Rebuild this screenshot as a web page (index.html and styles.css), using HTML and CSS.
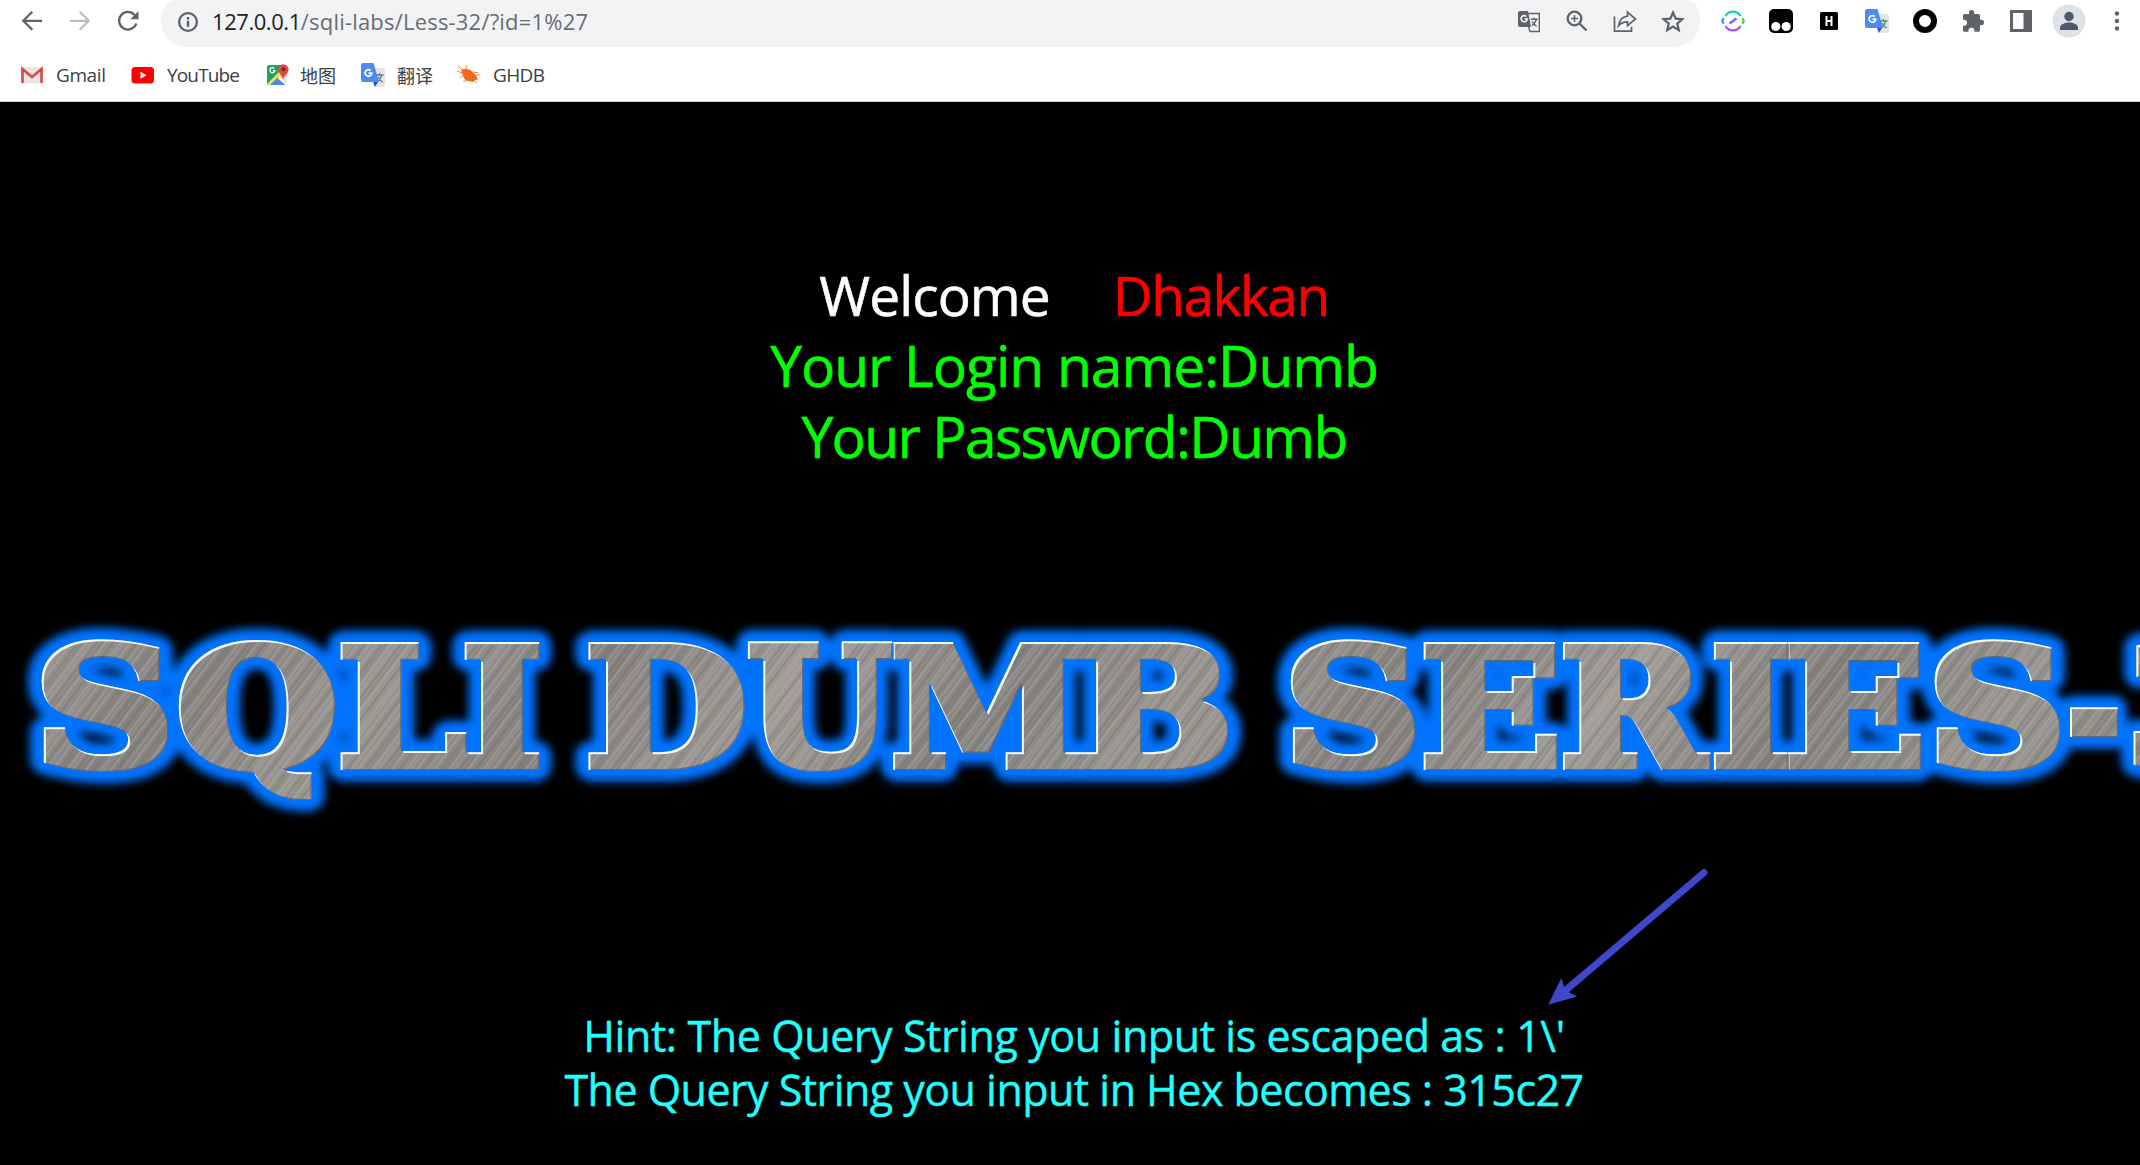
FILE: index.html
```
<!DOCTYPE html>
<html lang="en">
<head>
<meta charset="utf-8">
<title>127.0.0.1/sqli-labs/Less-32</title>
<link rel="stylesheet" href="styles.css">
</head>
<body>
<header class="chrome">
  <div class="toolbar">
    <nav class="nav">
      <span class="cell"><svg class="ico" viewBox="0 0 24 24"><path class="line" d="M22 11.8H3.5M12.3 2.8l-9 9 9 9"/></svg></span>
      <span class="cell faded"><svg class="ico" viewBox="0 0 24 24"><path class="line" d="M2 11.8h18.5M11.7 2.8l9 9-9 9"/></svg></span>
      <span class="cell"><svg class="ico" viewBox="0 0 24 24"><path class="line" d="M20.3 14.5A8.8 8.8 0 1 1 18.6 6"/><path class="solid" d="M22.5 2v8.2h-8.2z"/></svg></span>
    </nav>
    <div class="omnibox">
      <svg class="info" viewBox="0 0 24 24"><circle class="line" cx="12" cy="12" r="8.9"/><path class="solid" d="M10.8 10.8h2.4v6h-2.4zM10.8 7h2.4v2.4h-2.4z"/></svg>
      <div class="url"><span class="host">127.0.0.1</span><span class="path">/sqli-labs/Less-32/?id=1%27</span></div>
      <span class="cell"><svg class="ico" viewBox="0 0 24 24"><path class="thin" d="M11 4.500h11.300v18H13l-1.500-5M14 10.300h6.700M17 8.500v1.800M19.500 10.300c-1 3.200-2.500 5-4.500 6.500M15.100 12.500c1 2 2.500 3.500 4.500 4.500"/><path class="solid" d="M3 2h8l3 16H3a2 2 0 0 1-2-2V4a2 2 0 0 1 2-2z"/><path d="M9.400 7.500a3.100 3.100 0 1 0 .9 2.500H7.500" fill="none" stroke="#f1f3f4" stroke-width="1.600"/></svg></span>
      <span class="cell"><svg class="ico" viewBox="0 0 24 24"><circle class="line" cx="9.500" cy="9.500" r="6.800"/><path class="line" d="M14.500 14.500l7 7"/><path class="thin" d="M6 9.500h7M9.500 6v7"/></svg></span>
      <span class="cell"><svg class="ico" viewBox="0 0 24 24"><path class="thin2" d="M1.500 7.500v14.700h17v-4.500"/><path class="thin2" d="M14.500 3.200l8 6.800-8 6.600v-3.800c-4-.2-6.500 1-9 4 .8-5 3.500-9 9-9.600z"/></svg></span>
      <span class="cell"><svg class="ico" viewBox="0 0 24 24"><path class="thin2 heavy" d="M12 3.500l2.700 6.100 6.600.6-5 4.400 1.500 6.500-5.800-3.500-5.800 3.500 1.500-6.500-5-4.400 6.600-.6z"/></svg></span>
    </div>
    <div class="extensions">
      <span class="cell"><svg class="ico" viewBox="0 0 24 24"><g fill="none" stroke-width="2.200"><path d="M4.500 7a8.600 8.600 0 0 1 15 0" stroke="#10d0c8"/><path d="M4.500 17a8.600 8.600 0 0 0 15 0" stroke="#a94dff"/><path d="M3 9.500c-2.200 1-2.200 4 0 5" stroke="#2595ff"/><path d="M21 9.500c2.200 1 2.200 4 0 5" stroke="#23e047"/><path d="M8.500 14.500l7-5" stroke="#6a62ff"/></g></svg></span>
      <span class="cell"><svg class="ico" viewBox="0 0 24 24"><rect width="24" height="24" y="0" rx="5"/><circle cx="6.800" cy="17.500" r="4.600" fill="#fff"/><circle cx="17.200" cy="17.500" r="4.600" fill="#fff"/></svg></span>
      <span class="cell"><svg class="ico" viewBox="0 0 24 24"><rect x="3" y="3" width="18" height="18" rx="1.500"/><path d="M9.500 7v10M14.500 7v10M9.500 12h5" stroke="#fff" stroke-width="2"/></svg></span>
      <span class="cell"><svg class="ico" viewBox="0 0 24 24"><use href="#translate"/></svg></span>
      <span class="cell"><svg class="ico" viewBox="0 0 24 24"><circle cx="12" cy="12" r="9" fill="#fff" stroke="#000" stroke-width="6"/></svg></span>
      <span class="cell"><svg class="ico" viewBox="0 0 24 24"><path class="solid" d="M2 6.500Q2 5 3.600 5H8V3.600a2.600 2.600 0 0 1 5.200 0V5h4.200Q19 5 19 6.600v4.200h1.400a2.600 2.600 0 0 1 0 5.200H19v5.200q0 1.600-1.600 1.600h-4v-1a3 3 0 0 0-6 0v1H3.600Q2 22.800 2 21.200v-4.400h1a3 3 0 0 0 0-6H2z"/></svg></span>
      <span class="cell"><svg class="ico" viewBox="0 0 24 24"><path class="solid" fill-rule="evenodd" d="M1 1h22v22H1zM4 4v16h10.500V4z"/></svg></span>
      <span class="cell"><svg class="avatar" viewBox="0 0 34 34"><circle cx="17" cy="17" r="16.500" fill="#dee1e6"/><g fill="#4e586e"><circle cx="17" cy="12.500" r="4.700"/><path d="M8 26v-2.500c0-3 5-5 9-5s9 2 9 5V26z"/></g></svg></span>
      <span class="cell"><svg class="ico" viewBox="0 0 24 24"><g class="solid"><circle cx="12" cy="4.500" r="2.200"/><circle cx="12" cy="12" r="2.200"/><circle cx="12" cy="19.500" r="2.200"/></g></svg></span>
    </div>
  </div>
  <div class="bookmarks">
    <a class="bookmark gmail"><svg class="ico" viewBox="0 0 24 24"><rect x="1" y="4" width="22" height="16.500" rx="1.500" fill="#e6e6e6"/><path d="M2.500 20V6l9.500 8 9.500-8v14" fill="none" stroke="#dc4a3d" stroke-width="2.600"/></svg>Gmail</a>
    <a class="bookmark youtube"><svg class="ico" viewBox="0 0 24 24"><rect x="0.500" y="4" width="22.500" height="16.500" rx="3.500" fill="#f00"/><path d="M9.500 8.700l6 3.500-6 3.500z" fill="#fff"/></svg>YouTube</a>
    <a class="bookmark maps"><svg class="ico" viewBox="0 0 24 24"><rect x="1" y="2" width="20" height="20" rx="2" fill="#1fa463"/><path d="M21 10v12H3z" fill="#e3e3e3"/><path d="M1.500 20.500L14 8l4 4L6 22H3z" fill="#ffdb4a"/><path d="M4 22l8-8 8 8z" fill="#4a89f3"/><path d="M12.500 14.500L21 22" stroke="#fff" stroke-width="2"/><path d="M8.300 5.500a2.500 2.500 0 1 0 .6 2.200H7" fill="none" stroke="#fff" stroke-width="1.300"/><path d="M17.200 17c-.5-5-5-6-5-10.500a5.200 5.200 0 0 1 10.400 0C22.600 11 17.800 12 17.200 17z" fill="#e24a3f"/><circle cx="17.400" cy="6.200" r="2" fill="#7d231d"/></svg>地图</a>
    <a class="bookmark fanyi"><svg class="ico" viewBox="0 0 24 24"><g id="translate"><path d="M11 5h11q2 0 2 2v15q0 2-2 2h-8z" fill="#e4e4e4"/><path d="M14.500 12h8M18.500 10v2M21 12c-1 3-3 5.500-5.500 7M17 14c1 2 2.500 4 5 5" fill="none" stroke="#5d7f88" stroke-width="1.300"/><path d="M12 18.500h5.500L13.800 24z" fill="#2f51c8"/><path d="M2 0h10.500l5.500 19H2q-2 0-2-2V2q0-2 2-2z" fill="#4b8bf5"/><path d="M9.700 7.500a3.300 3.300 0 1 0 1 2.700H7.500" fill="none" stroke="#fff" stroke-width="1.800"/></g></svg>翻译</a>
    <a class="bookmark ghdb"><svg class="ico" viewBox="0 0 24 24"><path d="M4 7c4-2 8-1.500 11 1.500l4 4 2 4-3 .5-2 2-4-1c-4 0-5-3-6.500-6z" fill="#f2681c"/><path d="M1 3l5 5M0 8l7 3M9 2l1 5M15 9l7 1M18 12h5M17 17l3 3M12 17l-6 1.500M7 12l-4 3" stroke="#f58a4d" stroke-width="1" fill="none"/></svg>GHDB</a>
  </div>
</header>

<main class="page">
  <section class="login">
    <div class="welcome"><span>Welcome</span><span class="user">Dhakkan</span></div>
    <div class="name">Your Login name:Dumb</div>
    <div class="password">Your Password:Dumb</div>
  </section>

  <svg class="banner" viewBox="0 600 2140 230">
    <defs>
      <linearGradient id="sheen" gradientUnits="userSpaceOnUse" x1="0" y1="640" x2="260" y2="840" spreadMethod="reflect">
        <stop offset="0" stop-color="#a09c98"/><stop offset=".5" stop-color="#84817f"/><stop offset="1" stop-color="#9a9692"/>
      </linearGradient>
      <pattern id="brushed" width="2200" height="230" y="600" patternUnits="userSpaceOnUse">
        <g transform="translate(0 -600)">
          <rect y="600" width="2200" height="230" fill="url(#sheen)"/>
          <rect y="600" width="2200" height="230" fill="url(#scratches)"/>
        </g>
      </pattern>
      <pattern id="scratches" width="61" height="400" patternUnits="userSpaceOnUse" patternTransform="rotate(37)">
        <path stroke="#b4b0ab" stroke-opacity=".4" d="M3 0v400M17 0v400M29 0v400M44 0v400M56 0v400" stroke-width="2"/>
        <path stroke="#5f5d5c" stroke-opacity=".35" d="M8 0v400M22 0v400M37 0v400M50 0v400" stroke-width="1.500"/>
        <path stroke="#c4bfb9" stroke-opacity=".4" d="M12 0v400M33 0v400M59 0v400" stroke-width="1"/>
        <path stroke="#555" stroke-opacity=".4" d="M25 0v400M41 0v400" stroke-width=".8"/>
      </pattern>
      <filter id="glow" filterUnits="userSpaceOnUse" x="0" y="600" width="2200" height="230" color-interpolation-filters="sRGB"><feGaussianBlur stdDeviation="4.500"/></filter>
      <filter id="bevel" filterUnits="userSpaceOnUse" x="0" y="600" width="2200" height="230" color-interpolation-filters="sRGB">
        <feOffset in="SourceAlpha" dx="2" dy="2" result="down"/>
        <feComposite in="SourceAlpha" in2="down" operator="out" result="lightEdge"/>
        <feFlood flood-color="#f4fbff"/><feComposite in2="lightEdge" operator="in" result="light"/>
        <feOffset in="SourceAlpha" dx="-1.500" dy="-1.500" result="up"/>
        <feComposite in="SourceAlpha" in2="up" operator="out" result="darkEdge"/>
        <feFlood flood-color="#4c5668" flood-opacity=".7"/><feComposite in2="darkEdge" operator="in" result="dark"/>
        <feMerge><feMergeNode in="SourceGraphic"/><feMergeNode in="dark"/><feMergeNode in="light"/></feMerge>
      </filter>
      <g id="title" class="title">
        <text x="33.500" y="766" textLength="141.700" lengthAdjust="spacingAndGlyphs">S</text>
        <text x="175.400" y="766" textLength="162.800" lengthAdjust="spacingAndGlyphs">Q</text>
        <text x="336.500" y="766" textLength="129.300" lengthAdjust="spacingAndGlyphs">L</text>
        <text x="460.800" y="766" textLength="82.200" lengthAdjust="spacingAndGlyphs">I</text>
        <text x="584.300" y="766" textLength="163.400" lengthAdjust="spacingAndGlyphs">D</text>
        <text x="746.200" y="766" textLength="145.600" lengthAdjust="spacingAndGlyphs">U</text>
        <text x="889.900" y="766" textLength="193.800" lengthAdjust="spacingAndGlyphs">M</text>
        <text x="1074.300" y="766" textLength="159.800" lengthAdjust="spacingAndGlyphs">B</text>
        <text x="1282.700" y="766" textLength="139.400" lengthAdjust="spacingAndGlyphs">S</text>
        <text x="1419.400" y="766" textLength="142.200" lengthAdjust="spacingAndGlyphs">E</text>
        <text x="1558.900" y="766" textLength="146" lengthAdjust="spacingAndGlyphs">R</text>
        <text x="1710" y="766" textLength="81" lengthAdjust="spacingAndGlyphs">I</text>
        <text x="1783.400" y="766" textLength="142.200" lengthAdjust="spacingAndGlyphs">E</text>
        <text x="1926.600" y="766" textLength="140.600" lengthAdjust="spacingAndGlyphs">S</text>
        <text x="2066" y="766" textLength="55.800" lengthAdjust="spacingAndGlyphs">-</text>
        <text x="2125.500" y="766" textLength="123" lengthAdjust="spacingAndGlyphs">3</text>
      </g>
    </defs>
    <use href="#title" class="halo" filter="url(#glow)"/>
    <use href="#title" class="metal" filter="url(#bevel)"/>
  </svg>

  <section class="hints">
    <div class="hint">Hint: The Query String you input is escaped as : 1\'</div>
    <div class="hex">The Query String you input in Hex becomes : 315c27</div>
  </section>

  <svg class="arrow" viewBox="0 0 220 200"><path d="M184 42.700L46 160" stroke="#3f48cc" stroke-width="7" stroke-linecap="round"/><path d="M28.200 174.800L41.300 148l3.200 10 4.600 4.200 8.100 4.200z" fill="#3f48cc"/></svg>
</main>
</body>
</html>
```
FILE: styles.css
```
body {
  margin: 0;
  height: 1165px;
  overflow: hidden;
  background: #000;
  font-family: "Open Sans", "Noto Sans CJK SC", sans-serif;
}

svg { display: block; flex: none; }

/* browser chrome */
.chrome {
  height: 101px;
  background: #fff;
  border-bottom: 1px solid #d0d0d0;
}
.toolbar {
  display: flex;
  height: 47px;
}
.nav, .extensions { display: flex; height: 42px; }
.nav { padding-left: 8px; }
.extensions { margin-left: 9px; width: 431px; }
.cell {
  flex: none;
  width: 48px;
  height: 42px;
  display: flex;
  align-items: center;
  justify-content: center;
}
.faded { opacity: .42; }
.ico { width: 24px; height: 24px; }
.avatar { width: 34px; height: 34px; }
.line { fill: none; stroke: #5f6368; stroke-width: 2.3; }
.thin { fill: none; stroke: #5f6368; stroke-width: 1.4; }
.thin2 { fill: none; stroke: #5f6368; stroke-width: 1.7; }
.heavy { stroke-width: 2.2; }
.solid { fill: #5f6368; }

.omnibox {
  flex: 1;
  display: flex;
  height: 47px;
  margin-left: 9px;
  padding: 0 3px 0 15px;
  background: #f1f3f4;
  border-radius: 14px 14px 26px 26px / 20px 20px 26px 26px;
}
.info { width: 24px; height: 24px; margin-top: 10px; }
.url {
  flex: 1;
  margin-left: 12px;
  font-size: 22px;
  line-height: 42px;
  white-space: nowrap;
}
.host { color: #202124; letter-spacing: -.45px; }
.path { color: #696d71; letter-spacing: .2px; }

.bookmarks {
  display: flex;
  height: 54px;
  padding-left: 20px;
  color: #3c4043;
  font-size: 19px;
}
.bookmark {
  display: flex;
  align-items: center;
  height: 55px;
  gap: 12px;
}
.gmail { width: 111px; letter-spacing: -.4px; }
.youtube { width: 135px; letter-spacing: -.85px; }
.maps { width: 95px; gap: 10px; font-size: 18px; }
.fanyi { width: 96px; font-size: 18px; }
.ghdb { letter-spacing: -.6px; }

/* lesson page */
.page {
  position: relative;
  display: flex;
  flex-direction: column;
  height: 1063px;
  overflow: hidden;
  background: #000;
}
.login, .hints {
  padding-left: 8px;
  text-align: center;
  white-space: nowrap;
}
.login {
  height: 341px;
  padding-top: 157px;
  color: #0f0;
  font-size: 57px;
  line-height: 71px;
  -webkit-text-stroke: .6px currentColor;
}
.welcome {
  display: flex;
  justify-content: center;
  gap: 63px;
  color: #fff;
  font-size: 55px;
  letter-spacing: -.9px;
}
.user { color: #f00; letter-spacing: -1.5px; }
.name { letter-spacing: -1.05px; }
.password { letter-spacing: -1.66px; }

.banner { width: 2140px; height: 230px; }
.title {
  font: bold 164px "DejaVu Serif", serif;
}
.halo { fill: #0073ff; stroke: #0073ff; stroke-width: 31px; stroke-linejoin: round; }
.metal { fill: url(#brushed); stroke: url(#brushed); stroke-width: 8px; stroke-miterlimit: 2; }

.hints {
  padding-top: 179px;
  color: #2ff;
  font-size: 43px;
  line-height: 54px;
  -webkit-text-stroke: .4px currentColor;
}
.hint { letter-spacing: -.42px; }
.hex { letter-spacing: -.53px; }

/* annotation drawn over the page */
.arrow {
  position: absolute;
  left: 1520px;
  top: 728px;
  width: 220px;
  height: 200px;
}
```
